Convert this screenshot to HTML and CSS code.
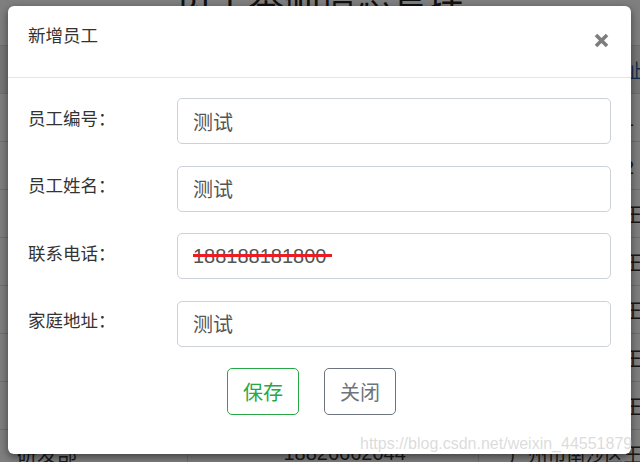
FILE: index.html
```html
<!DOCTYPE html>
<html lang="zh-CN">
<head>
<meta charset="utf-8">
<title>新增员工</title>
<link rel="stylesheet" href="styles.css">
</head>
<body>
<div class="page">
  <h1 class="page-title">员工基础信息管理</h1>
  <table class="grid">
    <colgroup><col class="w1"><col class="w2"><col class="w3"></colgroup>
    <thead>
      <tr><th class="c1">部门名称</th><th class="c2">联系电话</th><th class="c3">员工家庭住地址</th></tr>
    </thead>
    <tbody>
      <tr><td class="c1">研发部</td><td class="c2">18826662041</td><td class="c3">广州市天河区1</td></tr>
      <tr><td class="c1">研发部</td><td class="c2">18826662042</td><td class="c3">广州市天河区2</td></tr>
      <tr><td class="c1">研发部</td><td class="c2">18826662043</td><td class="c3">广州市南沙区王</td></tr>
      <tr><td class="c1">研发部</td><td class="c2">18826662044</td><td class="c3">广州市南沙区王</td></tr>
      <tr><td class="c1">研发部</td><td class="c2">18826662045</td><td class="c3">广州市南沙区王</td></tr>
      <tr><td class="c1">研发部</td><td class="c2">18826662046</td><td class="c3">广州市南沙区王</td></tr>
      <tr><td class="c1">研发部</td><td class="c2">18826662047</td><td class="c3">广州市南沙区王</td></tr>
      <tr><td class="c1">研发部</td><td class="c2">18826662044</td><td class="c3">广州市南沙区王</td></tr>
    </tbody>
  </table>
</div>

<div class="backdrop"></div>

<div class="modal">
  <div class="modal-header">
    <h4 class="modal-title">新增员工</h4>
    <button class="close" type="button" aria-label="关闭">
      <svg width="15" height="15" viewBox="0 0 15 15"><path d="M2 2 L13 13 M13 2 L2 13" stroke="#7d7d7d" stroke-width="3.6" fill="none"/></svg>
    </button>
  </div>
  <div class="modal-body">
    <div class="form">
      <label class="form-label">员工编号：</label>
      <input class="form-input" type="text" value="测试">
      <label class="form-label">员工姓名：</label>
      <input class="form-input" type="text" value="测试">
      <label class="form-label">联系电话：</label>
      <div class="strike-wrap">
        <input class="form-input" type="text" value="188188181800">
        <span class="strike"></span>
      </div>
      <label class="form-label">家庭地址：</label>
      <input class="form-input" type="text" value="测试">
    </div>
    <div class="actions">
      <button class="btn btn-save" type="button">保存</button>
      <button class="btn btn-dismiss" type="button">关闭</button>
    </div>
  </div>
</div>

<div class="watermark">https://blog.csdn.net/weixin_44551879</div>
</body>
</html>
```

FILE: styles.css
```css
html, body {
  margin: 0;
  padding: 0;
}
body {
  width: 640px;
  height: 462px;
  overflow: hidden;
  position: relative;
  background: #fff;
  font-family: "Liberation Sans", "Noto Sans CJK SC", sans-serif;
  color: #333;
}

/* background page */
.page {
  width: 640px;
  overflow: hidden;
}
.page-title {
  margin: -22px 0 0;
  height: 67px;
  font-size: 36px;
  line-height: 40px;
  font-weight: normal;
  text-align: center;
  color: #222;
}
.grid {
  border-collapse: collapse;
  table-layout: fixed;
  width: 640px;
  font-size: 20px;
  color: #333;
}
.grid .w1 { width: 187px; }
.grid .w2 { width: 291px; }
.grid .w3 { width: 162px; }
.grid th, .grid td {
  height: 47px;
  border-top: 1px solid #ddd;
  padding: 0;
  text-align: left;
  font-weight: normal;
  white-space: nowrap;
  overflow: hidden;
}
.grid thead th {
  background: #ececec;
  color: #2a5f95;
}
.grid .c1 { padding-left: 17px; border-right: 1px solid #ddd; }
.grid .c2 { padding-left: 96px; border-right: 1px solid #ddd; }
.grid .c3 { padding-left: 31px; font-size: 19px; }

.backdrop {
  position: absolute;
  inset: 0;
  background: rgba(0, 0, 0, 0.5);
}

/* modal */
.modal {
  position: absolute;
  left: 8px;
  top: 6px;
  width: 623px;
  height: 448px;
  box-sizing: border-box;
  background: #fff;
  border-radius: 6px;
  box-shadow: 0 3px 9px rgba(0, 0, 0, 0.5);
  display: flex;
  flex-direction: column;
}
.modal-header {
  box-sizing: border-box;
  height: 72px;
  padding: 18px 22px 0 20px;
  border-bottom: 1px solid #e5e5e5;
  display: flex;
  justify-content: space-between;
  align-items: flex-start;
}
.modal-title {
  margin: 0;
  font-size: 17.5px;
  line-height: 25px;
  font-weight: normal;
  color: #333;
}
.close {
  margin: 9px 0 0;
  padding: 0;
  border: 0;
  background: none;
  width: 15px;
  height: 15px;
  display: block;
}
.close svg {
  display: block;
}
.modal-body {
  padding: 20px 20px 0;
}
.form {
  display: grid;
  grid-template-columns: 149px 1fr;
  row-gap: 21.67px;
}
.form-label {
  padding-top: 8.5px;
  font-size: 17.5px;
  line-height: 25px;
  color: #333;
}
.form-input {
  box-sizing: border-box;
  width: 100%;
  height: 46px;
  margin: 0;
  padding: 0 15px;
  border: 1px solid #cdd1d8;
  border-radius: 5px;
  font-family: "Liberation Sans", "Noto Sans CJK SC", sans-serif;
  font-size: 20px;
  color: #555;
  background: #fff;
  outline: none;
}
.strike-wrap {
  position: relative;
}
.strike {
  position: absolute;
  left: 16px;
  top: 21px;
  width: 139px;
  height: 3px;
  background: #ec1c24;
}
.actions {
  margin-top: 21px;
  padding-left: 199px;
  display: flex;
  gap: 25px;
}
.btn {
  box-sizing: border-box;
  width: 72px;
  height: 47px;
  padding: 0;
  border: 1px solid;
  border-radius: 5px;
  background: #fff;
  font-family: "Liberation Sans", "Noto Sans CJK SC", sans-serif;
  font-size: 20px;
}
.btn-save {
  border-color: #28a745;
  color: #28a745;
}
.btn-dismiss {
  border-color: #6c757d;
  color: #6c757d;
}

.watermark {
  position: absolute;
  left: 360px;
  top: 435.5px;
  font-family: "Liberation Sans", sans-serif;
  font-size: 16px;
  line-height: 16px;
  white-space: nowrap;
  color: rgba(190, 190, 190, 0.55);
}
```
